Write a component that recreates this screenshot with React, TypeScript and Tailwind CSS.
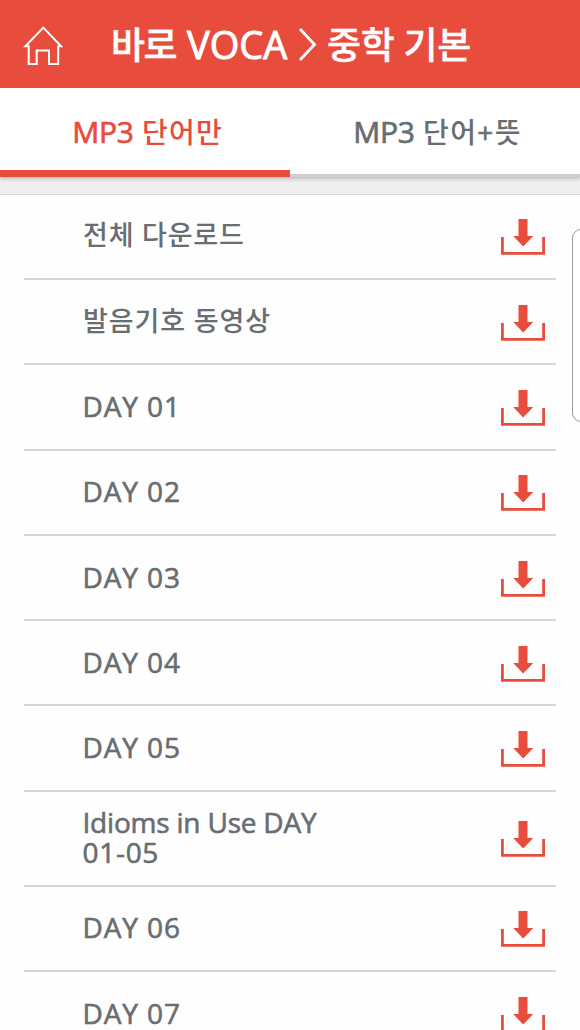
type Item = { label: string; korean?: boolean; tracking: string; range?: string };

const items: Item[] = [
  { label: '전체 다운로드', korean: true, tracking: 'tracking-[0.8px]' },
  { label: '발음기호 동영상', korean: true, tracking: 'tracking-[0.9px]' },
  { label: 'DAY 01', tracking: 'tracking-[0.9px]' },
  { label: 'DAY 02', tracking: 'tracking-[0.9px]' },
  { label: 'DAY 03', tracking: 'tracking-[0.9px]' },
  { label: 'DAY 04', tracking: 'tracking-[0.9px]' },
  { label: 'DAY 05', tracking: 'tracking-[0.9px]' },
  { label: 'Idioms in Use DAY', range: '01-05', tracking: 'tracking-[-0.2px]' },
  { label: 'DAY 06', tracking: 'tracking-[0.9px]' },
  { label: 'DAY 07', tracking: 'tracking-[0.9px]' },
];

function HomeIcon() {
  return (
    <svg width="40" height="42" viewBox="0 0 40 42" fill="none" stroke="white" strokeWidth="2" className="shrink-0">
      <path d="M2.400 23.200 20.300 4.600 38.200 23.200H35.200V41H26V27.400H13.700V41H5.700V23.200Z" />
    </svg>
  );
}

function DownloadIcon() {
  return (
    <svg width="44" height="36" viewBox="0 0 44 36" className="mt-[2px] shrink-0">
      <path d="M17.500 0h9v17h5.800L22.200 27.500 12.200 17h5.300Z" fill="#e84c3d" />
      <path d="M1.400 18v16.300h41.200V18" fill="none" stroke="#e84c3d" strokeWidth="2.800" />
    </svg>
  );
}

function Row({ item }: { item: Item }) {
  return (
    <li
      className={`mx-6 flex shrink-0 items-center justify-between border-b-2 border-[#d6d6d6] pr-[11px] pl-[58px] ${
        item.range ? 'h-[95px]' : 'h-[85.3px]'
      }`}
    >
      <span
        className={`mb-[2px] w-[260px] leading-[30px] font-medium ${
          item.korean ? 'pl-px text-[27px]' : 'pl-[0.5px] text-[28px] [-webkit-text-stroke:0.6px]'
        } ${item.tracking}`}
      >
        {item.label}
        {item.range && <span className="tracking-[0.7px]"> {item.range}</span>}
      </span>
      <DownloadIcon />
    </li>
  );
}

export default function App() {
  return (
    <main className="relative flex h-[1030px] w-[580px] flex-col overflow-hidden bg-[#fefefe] font-['Open_Sans','Noto_Sans_CJK_KR',sans-serif] text-[#686d71]">
      <header className="flex h-[88px] shrink-0 items-center bg-[#e84c3d] pl-[23px] text-white">
        <HomeIcon />
        <h1 className="ml-[48px] flex items-center text-[37px] leading-none font-medium whitespace-nowrap">
          <span className="w-[76px] tracking-[-1.5px] [-webkit-text-stroke:0.4px]">바로</span>
          <span className="w-[112px] text-[38px] tracking-[0px] [-webkit-text-stroke:1px]">VOCA</span>
          <svg width="20" height="36" viewBox="0 0 20 36" fill="none" stroke="white" strokeWidth="2.800" className="mt-[2px] shrink-0">
            <path d="M1 2 15.500 17.500 1 33" />
          </svg>
          <span className="ml-[8px] tracking-[-0.4px] [-webkit-text-stroke:0.4px]">중학 기본</span>
        </h1>
      </header>
      <nav className="z-10 flex h-[89px] shrink-0 bg-white text-[28px] leading-none font-medium whitespace-nowrap shadow-[0_2px_4px_rgba(0,0,0,0.22)]">
        <button className="flex h-full w-[290px] items-center border-b-[7px] border-[#e84c3d] pt-[5px] pl-[64px] text-[#e84c3d]">
          <span className="w-[78px] text-[30px] tracking-[-0.3px] [-webkit-text-stroke:0.7px]">MP3</span>
          <span className="tracking-[1.2px]">단어만</span>
        </button>
        <button className="flex h-full w-[290px] items-center border-b-[3px] border-[#d0d0d0] pt-px pl-[55px]">
          <span className="w-[78px] text-[30px] tracking-[-0.3px] [-webkit-text-stroke:0.7px]">MP3</span>
          <span className="tracking-[1.4px]">
            단어<span className="[-webkit-text-stroke:0.6px]">+</span>뜻
          </span>
        </button>
      </nav>
      <div className="h-[17.700px] shrink-0 border-b border-[#d9d9d9] bg-[#efefef]" />
      <ul className="flex flex-col">
        {items.map((item) => (
          <Row key={item.label} item={item} />
        ))}
      </ul>
      <div className="absolute top-[229px] left-[572px] h-[193px] w-[20px] rounded-[9px] border border-[#999] bg-white" />
    </main>
  );
}
